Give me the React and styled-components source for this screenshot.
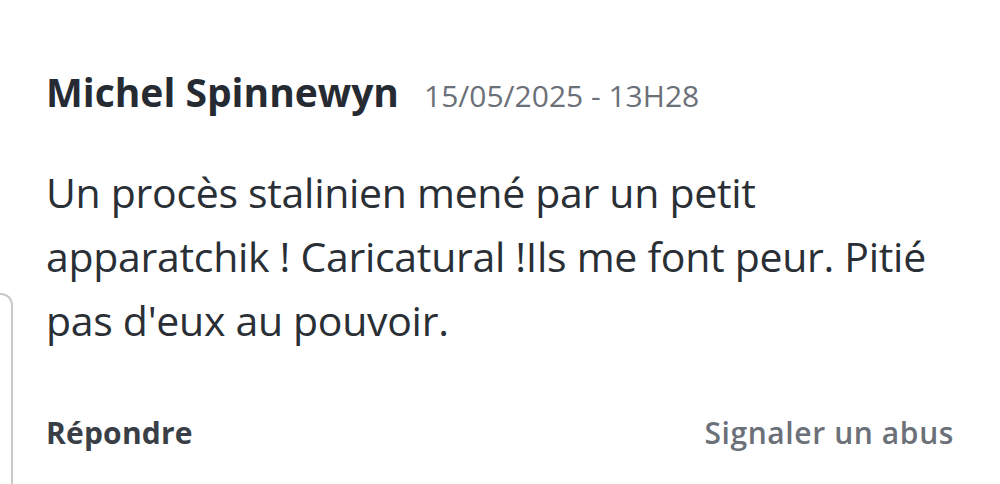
import React from "react";
import styled, { createGlobalStyle } from "styled-components";

const GlobalStyle = createGlobalStyle`
  html, body {
    margin: 0;
    padding: 0;
    background: #ffffff;
  }
  body {
    font-family: "Open Sans", "Liberation Sans", sans-serif;
    -webkit-font-smoothing: antialiased;
  }
`;

const Page = styled.div`
  display: flex;
  width: 1000px;
  height: 484px;
  overflow: hidden;
  background: #fff;
`;

const Peek = styled.div`
  align-self: flex-end;
  width: 13px;
  height: 191px;
  flex-shrink: 0;
  border-top: 2px solid #c9c9c9;
  border-right: 2px solid #c9c9c9;
  border-top-right-radius: 12px;
  box-sizing: border-box;
`;

const Comment = styled.article`
  flex: 1;
  display: flex;
  flex-direction: column;
  padding: 65px 46px 0 33px;
`;

const Header = styled.header`
  display: flex;
  align-items: baseline;
  gap: 25px;
`;

const Author = styled.span`
  font-size: 39px;
  font-weight: 700;
  color: #262b33;
  letter-spacing: 0;
`;

const Stamp = styled.time`
  font-size: 30px;
  color: #6b7079;
  letter-spacing: 0;
`;

const Body = styled.p`
  margin: 42px 0 0;
  font-size: 41px;
  line-height: 64px;
  color: #2a2f36;
  letter-spacing: -0.3px;
`;

const Actions = styled.footer`
  display: flex;
  justify-content: space-between;
  align-items: center;
  margin-top: 60px;
`;

const Action = styled.button`
  border: none;
  background: none;
  padding: 0;
  font-family: inherit;
  font-size: 30px;
  font-weight: ${(p) => (p.$muted ? 600 : 700)};
  color: ${(p) => (p.$muted ? "#6b7079" : "#3a3f47")};
  letter-spacing: ${(p) => (p.$muted ? "0.6px" : "0.2px")};
  cursor: pointer;
`;

export default function App() {
  return (
    <>
      <GlobalStyle />
      <Page>
        <Peek />
        <Comment>
          <Header>
            <Author>Michel Spinnewyn</Author>
            <Stamp>15/05/2025 - 13H28</Stamp>
          </Header>
          <Body>
            Un procès stalinien mené par un petit apparatchik ! Caricatural !Ils
            me font peur. Pitié pas d'eux au pouvoir.
          </Body>
          <Actions>
            <Action>Répondre</Action>
            <Action $muted>Signaler un abus</Action>
          </Actions>
        </Comment>
      </Page>
    </>
  );
}
